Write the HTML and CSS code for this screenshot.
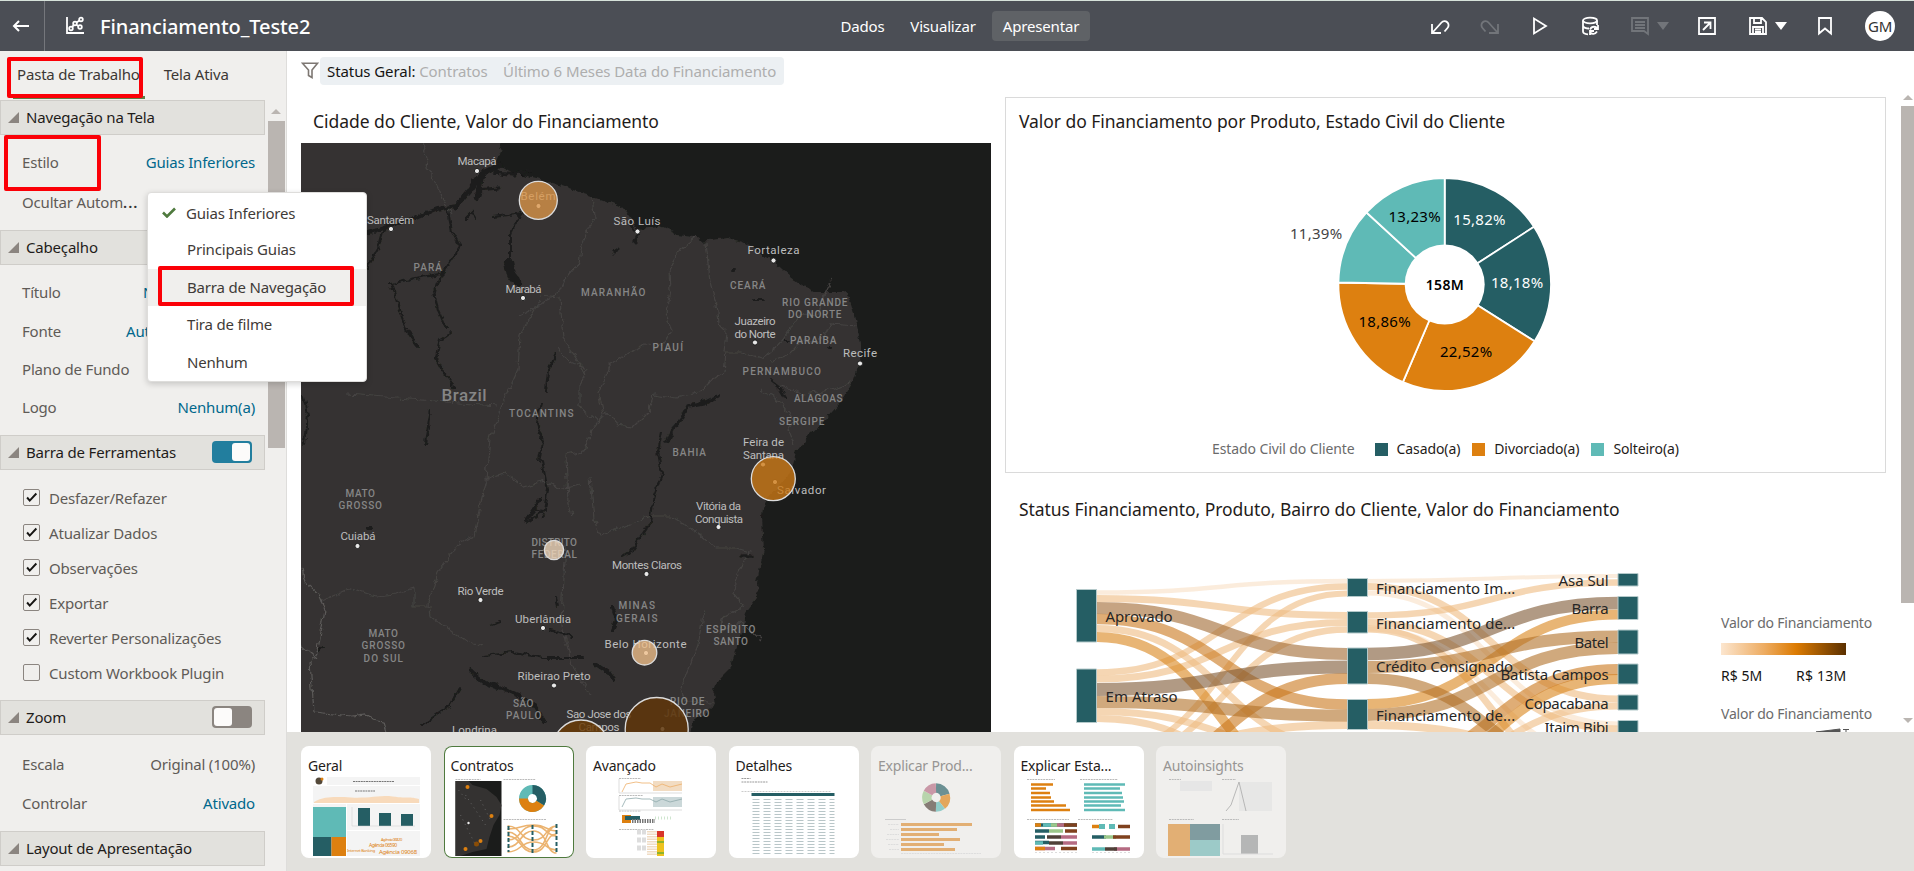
FILE: index.html
```html
<!DOCTYPE html>
<html lang="pt-BR">
<head>
<meta charset="utf-8">
<title>Financiamento_Teste2</title>
<link rel="stylesheet" href="styles.css">
</head>
<body>
<div class="app">
<header class="topbar">
  <div class="back"><svg width="18" height="14" viewBox="0 0 18 14"><path d="M17 7H2M7 2L2 7l5 5" fill="none" stroke="#fff" stroke-width="2"/></svg></div>
  <div class="brand">
    <svg width="20" height="20" viewBox="0 0 20 20" fill="none" stroke="#fff" stroke-width="1.8"><path d="M2 1v16h17"/><path d="M7 11l2-2M11.500 9l2 1M11.500 6.500l3-2"/><circle cx="6" cy="12.500" r="1.800"/><circle cx="10" cy="7.500" r="1.800"/><circle cx="16" cy="3.500" r="1.800"/><circle cx="15" cy="11" r="1.800"/></svg>
    <span class="title">Financiamento_Teste2</span>
  </div>
  <nav class="modes"><span>Dados</span><span>Visualizar</span><span class="active">Apresentar</span></nav>
  <div class="tools">
    <svg class="ic" viewBox="0 0 20 20"><path d="M2 8v9h9M3 16L11.500 6.500a4 4 0 0 1 6 5.500L14.500 15.500"/></svg>
    <svg class="ic dim" viewBox="0 0 20 20"><path d="M18 8v9H9M17 16L8.500 6.500a4 4 0 0 0-6 5.500L5.500 15.500"/></svg>
    <svg class="ic" viewBox="0 0 20 20"><path d="M4 2.500v15L16 10z"/></svg>
    <svg class="ic" viewBox="0 0 20 20"><ellipse cx="10" cy="4.500" rx="7" ry="2.800"/><path d="M3 4.500v11c0 1.500 2 2.500 5 2.800M17 4.500V9M3 10c1 2 3 2.500 6 2.500M10 13.500c2-4 6-3 7.500-1M18 9v4h-4M17 15.500c-2 3-5 3-7 1M10 19v-4h4"/></svg>
    <svg class="ic dim" viewBox="0 0 20 20"><path d="M2 2h16v16l-4-3H2zM5 6h10M5 9h10M5 12h10"/></svg>
    <i class="caret dimc"></i>
    <svg class="ic exp" viewBox="0 0 20 20"><path d="M2 2h16v16H2zM6 14l7-7M7 6.500h6.500V13"/></svg>
    <svg class="ic save" viewBox="0 0 20 20"><path d="M2 2h12l4 4v12H2zM6 2v5h7V2M5 18v-7h10v7M7 13.500h6M7 16h6"/></svg>
    <i class="caret"></i>
    <svg class="ic bm" viewBox="0 0 20 20"><path d="M4 2h12v15.500l-6-5-6 5z"/></svg>
    <span class="avatar">GM</span>
  </div>
</header>

<div class="work">
<aside class="side">
  <div class="tabs"><span class="tab on">Pasta de Trabalho</span><span class="tab">Tela Ativa</span></div>
  <div class="side-scroll">
    <div class="sections">
      <div class="sec"><i class="tri"></i>Navegação na Tela</div>
      <div class="body nav-body">
        <div class="row"><span>Estilo</span><a>Guias Inferiores</a></div>
        <div class="row"><span>Ocultar Autom<b class="dots">...</b></span></div>
      </div>
      <div class="sec"><i class="tri"></i>Cabeçalho</div>
      <div class="body head-body">
        <div class="row"><span>Título</span><a class="cut n">N</a></div>
        <div class="row"><span>Fonte</span><a class="cut">Auto</a></div>
        <div class="row"><span>Plano de Fundo</span></div>
        <div class="row"><span>Logo</span><a>Nenhum(a)</a></div>
      </div>
      <div class="sec"><i class="tri"></i>Barra de Ferramentas<span class="toggle on"></span></div>
      <div class="body check-body">
        <div class="check"><svg class="box" viewBox="0 0 17 17"><path d="M3.500 8.500l3 3.500 7.500-8"/></svg>Desfazer/Refazer</div>
        <div class="check"><svg class="box" viewBox="0 0 17 17"><path d="M3.500 8.500l3 3.500 7.500-8"/></svg>Atualizar Dados</div>
        <div class="check"><svg class="box" viewBox="0 0 17 17"><path d="M3.500 8.500l3 3.500 7.500-8"/></svg>Observações</div>
        <div class="check"><svg class="box" viewBox="0 0 17 17"><path d="M3.500 8.500l3 3.500 7.500-8"/></svg>Exportar</div>
        <div class="check"><svg class="box" viewBox="0 0 17 17"><path d="M3.500 8.500l3 3.500 7.500-8"/></svg>Reverter Personalizações</div>
        <div class="check"><svg class="box" viewBox="0 0 17 17"></svg>Custom Workbook Plugin</div>
      </div>
      <div class="sec"><i class="tri"></i>Zoom<span class="toggle"></span></div>
      <div class="body zoom-body">
        <div class="row"><span>Escala</span><span class="val">Original (100%)</span></div>
        <div class="row"><span>Controlar</span><a>Ativado</a></div>
      </div>
      <div class="sec"><i class="tri"></i>Layout de Apresentação</div>
    </div>
    <div class="sbar"><i class="up"></i><div class="thumb"></div></div>
  </div>
</aside>

<main class="main">
  <div class="filters">
    <svg width="19" height="17" viewBox="0 0 19 17"><path d="M1.500 1.200h15L11 8v7.500L7.500 13.500V8z" fill="none" stroke="#7d7772" stroke-width="1.600"/></svg>
    <span class="chip"><b>Status Geral:</b> Contratos</span><span class="chip two">Último 6 Meses Data do Financiamento</span>
  </div>
  <div class="canvas">
    <section class="col-map">
      <h2 class="vt t1">Cidade do Cliente, Valor do Financiamento</h2>
      <svg class="map" width="690" height="589" viewBox="301 143 690 589">
        <defs><filter id="rough" x="0" y="0" width="100%" height="100%"><feTurbulence type="fractalNoise" baseFrequency="0.12" numOctaves="3" seed="4"/><feDisplacementMap in="SourceGraphic" scale="7" xChannelSelector="R" yChannelSelector="G"/></filter></defs>
        <rect x="301" y="143" width="690" height="589" fill="#1b1c1b"/>
        <g filter="url(#rough)">
        <path fill="#343231" d="M290 130H510L503 143 495 163 512 173 537 178 558 185 582 193 608 202 623 208 629 216 638 229 660 227 677 235 695 237 700 241 728 238 743 242 763 255 773 262 790 277 803 287 815 292 843 292 849 297 853 310 857 327 861 343 860 363 853 382 840 403 825 420 810 433 797 450 792 467 780 485 764 502 762 517 764 550 760 567 757 583 758 598 752 605 746 613 744 627 735 653 730 668 718 680 713 693 715 705 705 713 693 720 688 745H290z"/>
        <g fill="none" stroke="#454342" stroke-width="1.200">
          <path d="M421 143l7 14-2 10 10 15 8 19 8 12 M592 195l2 23-12 25-3 20-15 18-6 12-18 12-20 10"/>
          <path d="M695 238l-15 12-11 20 1 22-4 20 6 20-10 14-14-2-20 9-18 12-12 28 6 24-6 6-18-16 0-24 8-14-20-8-10-14"/>
          <path d="M706 242l4 40 6 22 2 20 8 8-2 20 18 0 20 6 16-12 12-16 8-14 20-2 8-22 6-12"/>
          <path d="M726 352l-2 20-14 10-10 10-24 6-22-4-6 18-15 15-15-2-12-14-14 20-8 20-18 4 2 48 4 12M540 295l20 2 3 42 15 22 8 14"/>
          <path d="M540 300l-20 35-2 34-14 30-14 40-4 40 18-6 20 14 20-6 14 8 22-4M348 394l148 12"/>
          <path d="M488 476l-8 30-6 30-16 8-20 28-10 32 2 12 30 22 22 8 M320 602l30-14 26 8 20-2 18-6 0 18 18 0"/>
          <path d="M590 478l4 40 6 18 50-20 20 0 30 18 16 14 20 0 14 4-12 22-4 20 10 12-22 12-2 14 20-10 20 18"/>
          <path d="M566 545l-2 30-2 50 10 40 18 30M770 362l20-8 14-14 16 2 10-18 26 2M780 386l24 8 26-4 20-8M704 610l-6 34-12 30-6 18 6 10 28 1M760 390l20 12 14 18-6 10 6 14"/>
          <path stroke="#5c5a59" d="M301 568l3 14 14 12 7 16-7 40-8 12 4 50 38 4 14-2 6 6 12 2 6 22M301 645l16 14"/>
        </g>
        <g fill="none" stroke="#1b1c1b" stroke-width="2" stroke-linecap="round">
          <path stroke-width="5" d="M500 165l-20 10-10 15-15 18M482 175l-5 24"/>
          <path stroke-width="3.500" d="M495 172l18 2 18-3M455 206l-18 3-30 12-40 12"/>
          <path d="M448 210l4 22 8 14-6 10-12 18-8 18 4 18 8 18 M440 274l-25 4-24 6 10 30 8 20 8 12M384 228l-6 22-11 18M452 332l-12 8-4 18 10 18 10 12"/>
          <path d="M520 212l-10 24 0 24M466 218l6-6 4 6 M493 217l30-4"/><path stroke-width="8" d="M508 262l3 12 6 8"/>
          <path stroke-width="3" d="M630 222l8 12M620 248l-6 4M638 234l-4 7M478 190l20-2"/>
          <path d="M556 354l-8 16-2 22M431 410l-4 22-2 12M541 402l-4 20 6 20-4 20M304 395l4 20-3 30M542 460l6 30-4 20-16 12M536 510l8 6M662 432l-4 20 4 22-8 20-4 30-18 26-10 6"/>
          <path stroke-width="3.500" d="M718 396l-12 6-18 4-6 12-10 12-6 12M750 556l-8 0"/>
          <path d="M730 270h4M755 300h8M785 340h4M828 349h3M770 380l10 8 6 10"/>
          <path stroke-width="4" d="M470 670l14 12 18 6 18 8 14 10 10 16M596 664l12 8 6 8M540 500l-8 12-6 8M612 608l4 12-4 10M368 529h3"/>
          <path d="M483 655l30-3 30 6 40 0M548 630l16 4 8 4M460 688l-10 18-18 12-12 8M500 622l-10 4M556 598l2 8M318 652l6-6"/>
        </g></g>
        <g fill="#e8e8e8" stroke="#1f1f1f" stroke-width="1"><circle cx="477" cy="171" r="2.600"/><circle cx="391" cy="229" r="2.600"/><circle cx="538.500" cy="206" r="2.600"/><circle cx="637.500" cy="231.500" r="2.600"/><circle cx="523" cy="298" r="2.600"/><circle cx="773.500" cy="260.500" r="2.600"/><circle cx="755" cy="342.500" r="2.600"/><circle cx="860" cy="363.500" r="2.600"/><circle cx="357.500" cy="546" r="2.600"/><circle cx="480.500" cy="600" r="2.600"/><circle cx="543" cy="628" r="2.600"/><circle cx="554" cy="685.500" r="2.600"/><circle cx="646.500" cy="574" r="2.600"/><circle cx="646" cy="653" r="2.600"/><circle cx="718.500" cy="527" r="2.600"/><circle cx="763" cy="464.500" r="2.600"/><circle cx="775" cy="482" r="2.600"/><circle cx="662.500" cy="729" r="2.600"/></g>
        <g class="city">
          <text x="477" y="165" textLength="39">Macapá</text><text x="390.500" y="224" textLength="47">Santarém</text><text x="538" y="200" textLength="35">Belém</text>
          <text x="637" y="225" textLength="47">São Luís</text><text x="523.500" y="293" textLength="36">Marabá</text><text x="773.500" y="254" textLength="52">Fortaleza</text>
          <text x="755" y="325" textLength="41">Juazeiro</text><text x="755" y="338" textLength="41">do Norte</text><text x="860" y="357" textLength="34">Recife</text>
          <text x="358" y="540" textLength="35">Cuiabá</text><text x="480.500" y="595" textLength="46">Rio Verde</text><text x="543" y="623" textLength="56">Uberlândia</text><text x="554" y="680" textLength="73">Ribeirao Preto</text>
          <text x="647" y="569" textLength="70">Montes Claros</text><text x="645.500" y="647.500" textLength="82">Belo Horizonte</text><text x="718.500" y="510" textLength="45">Vitória da</text><text x="719" y="523" textLength="48">Conquista</text>
          <text x="763.500" y="446" textLength="41">Feira de</text><text x="763.500" y="459" textLength="41">Santana</text><text x="801.500" y="494" textLength="49">Salvador</text>
          <text x="599" y="718" textLength="65">Sao Jose dos</text><text x="599" y="731" textLength="41">Campos</text><text x="474.500" y="734" textLength="45">Londrina</text>
        </g>
        <text class="country" x="464" y="401" textLength="45">Brazil</text><text class="country" x="321" y="742" textLength="42">guay</text>
        <g class="state">
          <text x="428.500" y="271" textLength="30">PARÁ</text><text x="614" y="296" textLength="66">MARANHÃO</text><text x="542" y="417" textLength="66">TOCANTINS</text><text x="668.500" y="351" textLength="32">PIAUÍ</text>
          <text x="748.500" y="289" textLength="37">CEARÁ</text><text x="815.500" y="306" textLength="67">RIO GRANDE</text><text x="815.500" y="318" textLength="55">DO NORTE</text><text x="814" y="344" textLength="48">PARAÍBA</text><text x="782.500" y="375" textLength="80">PERNAMBUCO</text><text x="819" y="401.500" textLength="50">ALAGOAS</text><text x="802.500" y="424.500" textLength="47">SERGIPE</text>
          <text x="690" y="455.500" textLength="35">BAHIA</text><text x="361" y="496.500" textLength="31">MATO</text><text x="361" y="509" textLength="45">GROSSO</text><text x="384" y="637" textLength="31">MATO</text><text x="384" y="649" textLength="45">GROSSO</text><text x="384" y="662" textLength="41">DO SUL</text>
          <text x="555" y="546" textLength="47">DISTRITO</text><text x="555" y="557.500" textLength="47">FEDERAL</text><text x="637.500" y="609" textLength="38">MINAS</text><text x="637.500" y="622" textLength="43">GERAIS</text><text x="731.500" y="633" textLength="51">ESPÍRITO</text><text x="731.500" y="645" textLength="36">SANTO</text>
          <text x="524" y="706.500" textLength="22">SÃO</text><text x="524.500" y="719" textLength="37">PAULO</text><text x="688" y="705" textLength="36">RIO DE</text><text x="687.500" y="717" textLength="47">JANEIRO</text>
        </g>
        <g stroke="#dcdcdc" stroke-width="1.300">
          <circle cx="538.300" cy="200.300" r="19" fill="#dc9649" fill-opacity=".78"/><circle cx="773.300" cy="478.700" r="22" fill="#ce7a15" fill-opacity=".78"/><circle cx="554" cy="550" r="9.700" fill="#f2d9bd" fill-opacity=".78"/><circle cx="644.500" cy="652.700" r="12.300" fill="#efbf8a" fill-opacity=".78"/><circle cx="581" cy="748" r="28" fill="#6b3c06" fill-opacity=".82"/><circle cx="656.700" cy="729" r="31.500" fill="#5f360a" fill-opacity=".85"/>
        </g>
      </svg>
    </section>

    <section class="col-right">
      <div class="panel">
        <h2 class="vt t2">Valor do Financiamento por Produto, Estado Civil do Cliente</h2>
        <svg class="donut" width="879" height="299" viewBox="1006 138 879 299">
          <g stroke="#fff" stroke-width="1.800" transform="translate(0 .5)">
            <path fill="#255e64" d="M1444.700 284V177.700A106.300 106.300 0 0 1 1534.000 226.300z"/>
            <path fill="#255e64" d="M1444.700 284L1534 226.300A106.300 106.300 0 0 1 1534.600 340.800z"/>
            <path fill="#dd8010" d="M1444.700 284L1534.600 340.800A106.300 106.300 0 0 1 1402.900 381.700z"/>
            <path fill="#dd8010" d="M1444.700 284L1402.900 381.700A106.300 106.300 0 0 1 1338.400 282z"/>
            <path fill="#5fbab6" d="M1444.700 284L1338.400 282A106.300 106.300 0 0 1 1366.500 212z"/>
            <path fill="#5fbab6" d="M1444.700 284L1366.500 212A106.300 106.300 0 0 1 1444.700 177.700z"/>
          </g>
          <circle cx="1444.700" cy="284.500" r="40" fill="#fff"/>
          <g class="pct"><text x="1479.300" y="225" fill="#fff" textLength="52">15,82%</text><text x="1517" y="288" fill="#fff" textLength="52">18,18%</text><text x="1466" y="357" textLength="52">22,52%</text><text x="1384.500" y="327" textLength="52">18,86%</text><text x="1316" y="239" fill="#444" textLength="52">11,39%</text><text x="1414.500" y="222" textLength="52">13,23%</text><text class="tot" x="1444.700" y="290" textLength="38">158M</text></g>
        </svg>
        <div class="legend"><span class="lt">Estado Civil do Cliente</span><i class="sw c1"></i><span>Casado(a)</span><i class="sw c2"></i><span>Divorciado(a)</span><i class="sw c3"></i><span>Solteiro(a)</span></div>
      </div>
      <h2 class="vt t3">Status Financiamento, Produto, Bairro do Cliente, Valor do Financiamento</h2>
      <svg class="sankey" width="881" height="208" viewBox="1005 524 881 208">
        <g fill="none" stroke-opacity=".6">
          <g stroke="#f9dfc4"><path stroke-width="4.500" d="M1097 592.500C1222 592.500 1222 581 1347 581"/><path stroke-width="4" d="M1367 581C1492 581 1492 576 1618 576"/><path stroke-width="5" d="M1367 593C1492 593 1492 724 1618 724"/><path stroke-width="5" d="M1367 629C1492 629 1492 760 1618 760"/></g>
          <g stroke="#efbb80">
            <path stroke-width="7" d="M1097 598.500C1222 598.500 1222 615.500 1347 615.500"/><path stroke-width="7" d="M1097 628.500C1222 628.500 1222 748 1347 748"/>
            <path stroke-width="6.500" d="M1097 672.500C1222 672.500 1222 586.500 1347 586.500"/><path stroke-width="7" d="M1097 679C1222 679 1222 622.500 1347 622.500"/><path stroke-width="7" d="M1097 711.500C1222 711.500 1222 755 1347 755"/><path stroke-width="7" d="M1097 718.500C1222 718.500 1222 800 1347 800"/>
            <path stroke-width="6" d="M1097 755C1222 755 1222 593.500 1347 593.500"/><path stroke-width="6.500" d="M1097 765C1222 765 1222 629.500 1347 629.500"/><path stroke-width="8" d="M1097 750C1222 750 1222 725 1347 725"/>
            <path stroke-width="6.500" d="M1367 615.500C1492 615.500 1492 582.500 1618 582.500"/><path stroke-width="7" d="M1367 586.500C1492 586.500 1492 699 1618 699"/><path stroke-width="7" d="M1367 622.500C1492 622.500 1492 729 1618 729"/><path stroke-width="7" d="M1367 629C1492 629 1492 790 1618 790"/><path stroke-width="8" d="M1367 725C1492 725 1492 755 1618 755"/><path stroke-width="7" d="M1367 790C1492 790 1492 706 1618 706"/>
          </g>
          <g stroke="#d98419"><path stroke-width="10" d="M1097 637C1222 637 1222 800 1347 800"/><path stroke-width="10" d="M1367 704C1492 704 1492 614.500 1618 614.500"/><path stroke-width="10" d="M1367 790C1492 790 1492 679 1618 679"/></g>
          <g stroke="#c9761a"><path stroke-width="10.500" d="M1097 619C1222 619 1222 704.500 1347 704.500"/><path stroke-width="11" d="M1097 785C1222 785 1222 678.500 1347 678.500"/><path stroke-width="11" d="M1367 770C1492 770 1492 669.500 1618 669.500"/></g>
          <g stroke="#b06f26"><path stroke-width="12" d="M1097 702C1222 702 1222 715.500 1347 715.500"/><path stroke-width="12" d="M1367 667C1492 667 1492 636.500 1618 636.500"/><path stroke-width="11" d="M1367 678.500C1492 678.500 1492 780 1618 780"/><path stroke-width="12" d="M1367 715C1492 715 1492 648 1618 648"/></g>
          <g stroke="#a0682e"><path stroke-width="12" d="M1097 608C1222 608 1222 654 1347 654"/></g>
          <g stroke="#7d5632"><path stroke-width="13" d="M1097 689.500C1222 689.500 1222 667 1347 667"/><path stroke-width="12.500" d="M1367 654C1492 654 1492 603 1618 603"/></g>
        </g>
        <g fill="#255e64" stroke="#b4c9ca"><path d="M1076.500 589.500h20v52.500h-20zM1076.500 669h20v53.500h-20zM1347.500 578.500h20v18h-20zM1347.500 611.500h20v21.500h-20zM1347.500 648h20v36h-20zM1347.500 699.500h20v30h-20zM1618 573.500h20v12.500h-20zM1618 596.500h20v23h-20zM1618 630h20v24h-20zM1618 664h20v20h-20zM1618 695h20v15h-20zM1618 720.500h20v15h-20z"/></g>
        <g class="sk"><text x="1105.500" y="622" textLength="67">Aprovado</text><text x="1105.500" y="702" textLength="72">Em Atraso</text><text x="1376" y="594" textLength="139">Financiamento Im...</text><text x="1376" y="629" textLength="139">Financiamento de...</text><text x="1376" y="672" textLength="137">Crédito Consignado</text><text x="1376" y="721" textLength="139">Financiamento de...</text></g>
        <g class="sk end"><text x="1608.500" y="586" textLength="50">Asa Sul</text><text x="1608.500" y="614" textLength="37">Barra</text><text x="1608.500" y="648" textLength="34">Batel</text><text x="1608.500" y="680" textLength="108">Batista Campos</text><text x="1608.500" y="709" textLength="84">Copacabana</text><text x="1608.500" y="733" textLength="64">Itaim Bibi</text></g>
        <defs><linearGradient id="ramp"><stop offset="0" stop-color="#fce6cf"/><stop offset=".35" stop-color="#edab60"/><stop offset=".6" stop-color="#dc7b02"/><stop offset="1" stop-color="#5b3000"/></linearGradient></defs>
        <g class="lg"><text x="1721" y="628" textLength="151">Valor do Financiamento</text><rect x="1721" y="643" width="125" height="12" fill="url(#ramp)"/><text class="k" x="1721" y="681" textLength="41">R$ 5M</text><text class="k" x="1796" y="681" textLength="50">R$ 13M</text><text x="1721" y="719" textLength="151">Valor do Financiamento</text><path d="M1816 732l24-3v3zM1843 729.500h6M1846 729v3" fill="#555" stroke="#555"/></g>
      </svg>
    </section>
    <div class="mbar"><i class="up"></i><div class="thumb"></div><i class="down"></i></div>
  </div>

  <footer class="strip">
    <div class="card"><span>Geral</span>
      <svg width="130" height="84" viewBox="301 774 130 84"><rect x="313" y="777" width="107" height="79" fill="#f4f4f4"/><rect x="313" y="777" width="14" height="8" fill="#fff"/><circle cx="319" cy="781" r="3.500" fill="#54493a"/><circle cx="322" cy="779" r="1.500" fill="#dd8010"/><path d="M313 785.500h107M313 803.500h107M346.500 804v53M347 830.500h73" stroke="#fff"/><path d="M353 781.500h41M355 791h20" stroke="#777" stroke-dasharray="2 .6" stroke-width="1.200"/><path d="M314 802c10-6 20-5 30-5 20 2 30-1 45-1 20 3 18 0 30 3v4h-105z" fill="#f8dabb"/><rect x="313" y="807" width="33" height="30" fill="#5fbab6"/><rect x="313" y="837" width="18.500" height="19" fill="#255e64"/><rect x="331.500" y="837" width="14.500" height="19" fill="#dd8010"/><path d="M358 808h12v18h-12zM379 813h12v13h-12zM401 814h12v12h-12z" fill="#255e64"/><path d="M352 807v19h63" fill="none" stroke="#ccc" stroke-width=".5"/><g fill="#dd8010"><text x="381" y="841" font-size="4" textLength="21">Agência 06820</text><text x="369" y="847" font-size="5" textLength="28">Agência 06590</text><text x="347" y="852" font-size="4" textLength="28">Internet Banking</text><text x="379" y="854" font-size="6" textLength="38">Agência 09068</text></g></svg></div>
    <div class="card sel"><span>Contratos</span>
      <svg width="130" height="84" viewBox="443.500 774 130 84"><path d="M455 779.500h25M503 779.500h32M503 819.500h43" stroke="#bbb" stroke-dasharray="2 .7"/><rect x="455" y="781" width="46" height="75" fill="#1b1c1b"/><path d="M455 781h13l4 4 14 4 10 8 5 8-2 10-6 10-4 12-3 12-14 3-12 4h-5z" fill="#343231"/><path d="M458 790l8 10M465 795l20 30M460 815l15 30M480 800l10 20" stroke="#777" stroke-width=".7" stroke-dasharray="1 4"/><g fill="#dd8010"><circle cx="467" cy="787" r="2"/><circle cx="491" cy="816" r="2"/><circle cx="476" cy="844" r="2.500" fill="#8a4d07"/><circle cx="480" cy="841" r="2"/><circle cx="465" cy="849" r="2"/></g><circle cx="468" cy="823" r="1.200" fill="#eee"/><g fill="none" stroke-width="9"><circle cx="532" cy="798.500" r="9" stroke="#5fbab6"/><path d="M532 789.500a9 9 0 0 1 7.700 13.700" stroke="#255e64"/><path d="M539.700 803.200a9 9 0 0 1-16.700-4.700" stroke="#dd8010"/></g><g fill="none" stroke="#dd8010" stroke-opacity=".6" stroke-width="1.600"><path d="M507 826c14 0 12 14 26 14s12-14 23-14M507 832c14 0 12 18 26 18s12-24 23-24M507 840c14 0 12-14 26-14s12 10 23 10M507 847c14 0 12-16 26-16s12 22 23 22M507 852c14 0 12-10 26-10s12 8 23 8M507 829c14 0 12-4 26-4s12 6 23 6M507 836c14 0 12 16 26 16s12-18 23-18"/></g><path d="M508 826v26M532 825v29M556 824v29" stroke="#255e64" stroke-width="2" stroke-dasharray="4 2"/></svg></div>
    <div class="card"><span>Avançado</span>
      <svg width="130" height="84" viewBox="586 774 130 84"><path d="M619 778.500h22M619 795.500h24M619 811h22M619 829.500h35" stroke="#bbb" stroke-dasharray="2 .7"/><rect x="653" y="781" width="29" height="10" fill="#f2dcc2"/><rect x="653" y="797" width="29" height="10" fill="#cbd8d9"/><path d="M622 792l4-8 10-2 6 1 8 0 6 4 6-3 8 3 12-3" fill="none" stroke="#edb06b" stroke-width=".8"/><path d="M622 807l4-8 10-1 6 1 8 0 6 3 6-3 8 3 12-3" fill="none" stroke="#8fa9ab" stroke-width=".8"/><path d="M619 779v14h63M619 796v14h63" stroke="#ddd" fill="none"/><path d="M622 819h9" stroke="#dd8010" stroke-width="8"/><path d="M625 818h15" stroke="#255e64" stroke-width="4"/><path d="M632 821h23" stroke="#777" stroke-width="4" stroke-dasharray="1.500 1"/><path d="M655 818h18" stroke="#cfe6cf" stroke-width="3" stroke-dasharray="1 2"/><path d="M637 832h9M637 840h9M637 848h9" stroke="#ddd" stroke-width="5" stroke-dasharray="4 1"/><path d="M652 831v25" stroke="#f0dcc4" stroke-width="10" stroke-dasharray="1.500 1"/><rect x="657" y="831" width="7" height="25" fill="#eec21e"/><rect x="657" y="831" width="7" height="6" fill="#d8352a"/><path d="M657 842h7M657 853h7" stroke="#8fb32c" stroke-width="2"/></svg></div>
    <div class="card"><span>Detalhes</span>
      <svg width="130" height="84" viewBox="728.500 774 130 84"><path d="M741 778.500h9M741 782h26" stroke="#999" stroke-dasharray="2 .7"/><path d="M741 791.500h90" stroke="#ccc" stroke-dasharray="2 1"/><rect x="751" y="793" width="83" height="3" fill="#255e64"/><g stroke="#b9c6c8" stroke-dasharray="7 4"><path d="M752 799.500h82M752 802.500h82M752 805.500h82M752 808.500h82M752 811.500h82M752 814.500h82M752 817.500h82M752 820.500h82M752 823.500h82M752 826.500h82M752 829.500h82M752 832.500h82M752 835.500h82M752 838.500h82M752 841.500h82M752 844.500h82M752 847.500h82M752 850.500h82M752 853.500h82"/></g></svg></div>
    <div class="card off"><span>Explicar Prod...</span>
      <svg width="130" height="84" viewBox="871 774 130 84"><g fill="none" stroke-width="9.500" opacity=".65"><path stroke="#255e64" d="M936 788a9.500 9.500 0 0 1 9 7"/><path stroke="#dd8010" d="M945 795a9.500 9.500 0 0 1-3 10"/><path stroke="#5fbab6" d="M942 805a9.500 9.500 0 0 1-6 2"/><path stroke="#4f4038" d="M936 807a9.500 9.500 0 0 1-8-5"/><path stroke="#9bc78a" d="M928 802a9.500 9.500 0 0 1 0-9"/><path stroke="#b56b82" d="M928 793a9.500 9.500 0 0 1 8-5"/></g><path d="M885 819.500h21" stroke="#ccc"/><path d="M901 824.500h71M901 829.500h56M901 834.500h38M901 839.500h59M901 844.500h43M901 849.500h54" stroke="#e2af74" stroke-width="3"/><path d="M888 824.500h11M890 829.500h9M887 834.500h12M886 839.500h13M888 844.500h11M889 849.500h10M901 853.500h80" stroke="#ddd" stroke-dasharray="2 .7"/></svg></div>
    <div class="card"><span>Explicar Esta...</span>
      <svg width="130" height="84" viewBox="1013 774 130 84"><path d="M1026 779.500h28M1079 779.500h38M1026 819.500h42M1077 819.500h35" stroke="#bbb" stroke-dasharray="2 .7"/><path d="M1030 784.500h22M1030 788.500h15M1030 793h19M1030 797.500h20M1030 801.500h23M1030 805.500h35M1030 810h39" stroke="#dd8010" stroke-width="2.600"/><path d="M1083 784.500h41M1083 788.500h36M1083 793h38M1083 797.500h39M1083 801.500h40M1083 805.500h37M1083 810h41" stroke="#5fbab6" stroke-width="2.600"/><g stroke-width="3.500"><path stroke="#255e64" d="M1034 825h42M1034 831h14M1034 837h10M1034 842.500h14M1091 837h14"/><path stroke="#5fbab6" d="M1042 825h8M1034 843h8"/><path stroke="#9bc78a" d="M1050 825h8M1048 831h14M1103 837h12"/><path stroke="#b56b82" d="M1056 825h10M1060 837h16M1062 843h14M1034 848.500h20M1113 849h16"/><path stroke="#7f411e" d="M1063 825h13M1064 831h12M1060 848.500h16M1112 837h17M1117 826.500h12"/><path stroke="#4f4038" d="M1046 837h14M1048 843h14M1104 849h12"/><path stroke="#5fbab6" d="M1091 849h13"/><path stroke="#dd8010" d="M1034 825h6M1034 848.500h10M1091 826.500h9"/></g><path stroke="#5fbab6" stroke-width="5" d="M1098 826.500h6M1108 826.500h6"/><path d="M1034 852.500h42M1091 852.500h40" stroke="#ddd" stroke-dasharray="2 2"/></svg></div>
    <div class="card off"><span>Autoinsights</span>
      <svg width="130" height="84" viewBox="1156 774 130 84"><path d="M1169 779.500h12M1222 779.500h14M1169 819.500h25M1222 819.500h17" stroke="#bbb" stroke-dasharray="2 .7"/><rect x="1180" y="781" width="32" height="10" fill="#e6e6e6"/><rect x="1239" y="782" width="33" height="29" fill="#e7e7e6"/><path d="M1226 811l5-6 8-23 7 29" fill="none" stroke="#aaa" stroke-width=".8"/><rect x="1168" y="824" width="22" height="32" fill="#e2af74"/><rect x="1190" y="824" width="30" height="16" fill="#809ca0"/><rect x="1190" y="840" width="30" height="16" fill="#9ccac8"/><rect x="1241" y="835" width="17" height="19" fill="#b5b6b6"/><path d="M1223 824v30h50" fill="none" stroke="#ddd"/></svg></div>
  </footer>
</main>
</div>

<ul class="menu">
  <li class="ck"><svg width="14" height="11" viewBox="0 0 14 11"><path d="M1 5.500l4 4 8-8" fill="none" stroke="#4f7a3e" stroke-width="2.600"/></svg>Guias Inferiores</li>
  <li>Principais Guias</li><li class="hov">Barra de Navegação</li><li>Tira de filme</li><li>Nenhum</li>
</ul>
<div class="mark m1"></div><div class="mark m2"></div><div class="mark m3"></div>
</div>
</body>
</html>
```
FILE: styles.css
```css
*{box-sizing:border-box}
body{margin:0;width:1914px;height:871px;overflow:hidden;background:#fff;font:15px "Noto Sans","Open Sans",sans-serif;letter-spacing:-.18px;color:#1f1c1a}
svg{display:block;flex:none}
.app{position:relative;height:871px;display:flex;flex-direction:column}
.topbar{height:51px;flex:none;background:#4b4e55;border-top:1px solid #d6e2da;display:flex;align-items:center;color:#fff}
.back{width:45px;height:50px;border-right:1px solid #75777c;display:flex;align-items:center;justify-content:center;padding-right:2px}
.brand{width:781px;display:flex;align-items:center;gap:15px;padding-left:20px}
.title{font-size:20px;font-weight:500;letter-spacing:-.1px}
.modes{display:flex;align-items:center;height:30px}
.modes span{height:30px;line-height:30px;padding:0 9px;width:98px;text-align:center;border-radius:4px}
.modes span:nth-child(1){width:73px}
.modes span:nth-child(2){width:93px;padding:0 14px 0 9px}
.modes .active{background:#5f6266}
.tools{margin-left:auto;display:flex;align-items:center;padding-right:19px}
.ic{width:20px;height:20px;fill:none;stroke:#fff;stroke-width:1.8;margin-right:30px}
.ic.dim{stroke:#72757a}
.caret{border:6px solid transparent;border-top:8px solid #fff;border-bottom:0;margin-right:28px}
.ic:has(+ .caret){margin-right:7px}
.dimc{border-top-color:#72757a}
.exp{margin-right:31px}
.avatar{width:30px;height:30px;border-radius:50%;background:#fff;color:#333;text-align:center;line-height:30px;font-size:15px}
.work{flex:1;display:flex;min-height:0}
.side{width:287px;background:#f0efed;border-right:1px solid #dedddb;display:flex;flex-direction:column}
.tabs{height:49px;flex:none;display:flex;padding-left:13px}
.tab{height:48px;line-height:47px;padding:0 5px;width:134px;color:#3c3835;white-space:nowrap}
.tab.on{border-bottom:3px solid #5c8048;margin-right:14px;padding-left:4px}
.side-scroll{flex:1;display:flex;min-height:0}
.sections{width:265px}
.sec{height:35px;border:1px solid #cfcdc9;background:#e2e1dd;display:flex;align-items:center;padding:0 12px 1px 7px}
.tri{border-left:11px solid transparent;border-bottom:11px solid #8b8580;margin-right:7px}
.toggle{margin-left:auto;width:40px;height:22px;border-radius:4px;background:#8b8580;padding:2px;display:flex}
.toggle::before{content:"";width:18px;height:18px;border-radius:3px;background:#fcfbfa}
.toggle.on{background:#227e9e;justify-content:flex-end}
.body{padding:9px 10px 0 22px;color:#5f5b57}
.nav-body{height:95px;padding-top:7px}
.head-body{height:170px;padding-top:8px}
.check-body{height:230px;padding-top:10px;padding-left:23px}
.zoom-body{height:96px}
.row{height:39px;display:flex;align-items:center;justify-content:space-between;white-space:nowrap}
.nav-body .row{height:40px}
.head-body .row{height:38.4px}
.row a{color:#00688c}
.dots{font-weight:600;color:#333;letter-spacing:1px}
.cut{width:129px}
.cut.n{width:112px}
.check{height:35px;display:flex;align-items:center;gap:9px}
.box{width:17px;height:17px;border:1px solid #8b8580;border-radius:2px;fill:none;stroke:#161513;stroke-width:2.2}
.sbar{width:21px;display:flex;flex-direction:column;align-items:center;padding:9px 0 0}
.sbar .thumb{width:17px;height:327px;background:#bab5b1;margin-left:1px}
.up{border:5px solid transparent;border-bottom:5px solid #bab5b1;border-top:0;margin-bottom:7px}
.down{border:5px solid transparent;border-top:5px solid #bab5b1;border-bottom:0}
.main{flex:1;display:flex;flex-direction:column;min-width:0}
.filters{height:42px;flex:none;display:flex;align-items:center;padding:0 0 3px 14px}
.chip{background:#ecf0f3;height:28px;line-height:29px;border-radius:4px 0 0 4px;padding:0 6px 0 7px;color:#aeaeae;width:176px;white-space:nowrap;letter-spacing:-.08px}
.chip b{font-weight:400;color:#161513}
.chip.two{width:288px;border-radius:0 4px 4px 0}
.canvas{height:639px;flex:none;overflow:hidden;display:flex}
.col-map{width:690px;margin-left:14px}
.vt{margin:0;font-weight:400;font-size:17.5px;letter-spacing:-.05px;white-space:nowrap}
.t1{height:50px;line-height:56px;padding-left:12px}
.col-right{width:881px;margin:4px 0 0 14px}
.panel{border:1px solid #dadada;height:376px}
.t2{height:40px;line-height:46px;padding-left:13px}
.t3{height:51px;line-height:72px;padding-left:14px}
.legend{display:flex;align-items:center;font-size:14px;height:24px;padding-left:206px;line-height:20px;letter-spacing:-.1px}
.lt{color:#6b6b6b;margin-right:20px}
.sw{width:13px;height:13px;margin-right:9px}
.legend span:not(.lt){margin-right:12px}
.c1{background:#255e64}.c2{background:#dd8010}.c3{background:#5fbab6}
.city text{font:11.5px Roboto,sans-serif;fill:#bdbdbd;text-anchor:middle;letter-spacing:0}
.state text{font:500 10px Roboto,sans-serif;fill:#868686;text-anchor:middle;letter-spacing:1.5px}
.country{font:500 17px Roboto,sans-serif;fill:#858585;text-anchor:middle}
.pct text{font-size:15px;text-anchor:middle}
.pct .tot{font-size:14px;font-weight:600}
.sk text{font-size:15px;fill:#262626}
.end text{text-anchor:end}
.lg text{font-size:14px;fill:#6b6b6b}
.lg .k{fill:#161513}
.mbar{width:13px;margin-left:15px;display:flex;flex-direction:column;align-items:center;padding-top:2px}
.mbar .thumb{width:13px;height:497px;background:#bab5b1;flex:none;margin-bottom:115px}
.mbar .up{margin-bottom:6px}
.strip{flex:1;background:#e2e1dd;display:flex;gap:12.5px;padding:14px 0 0 14px}
.card{width:130px;height:112px;background:#fff;border-radius:8px;overflow:hidden;flex:none}
.card span{display:block;height:28px;line-height:39px;padding-left:7px;font-size:14px}
.sel{box-shadow:inset 0 0 0 1px #4f7a3e}
.off{background:#f0efed}
.off span{color:#979593}
.menu{position:absolute;left:147px;top:192px;width:220px;height:190px;margin:0;padding:1px 0;list-style:none;background:#fff;border:1px solid #dedddb;border-radius:4px;box-shadow:0 2px 6px rgba(0,0,0,.18);color:#3f3b38}
.menu li{height:37.4px;line-height:36px;padding-left:39px}
.menu .ck{display:flex;align-items:center;padding-left:14px;gap:10px}
.menu .hov{background:#f0efed}
.mark{position:absolute;border:4px solid #fb0007;border-radius:2px}
.m1{left:7px;top:57px;width:136px;height:41px}
.m2{left:4px;top:135px;width:97px;height:56px}
.m3{left:158px;top:266px;width:196px;height:40px}
```
